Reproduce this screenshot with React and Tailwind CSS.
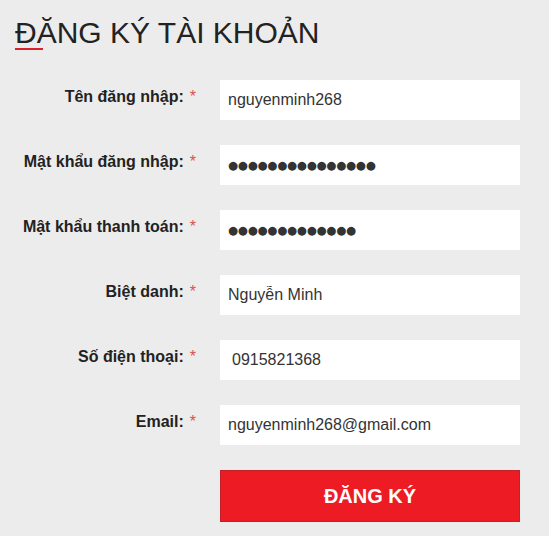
import { useState } from 'react';

const fields = [
  { label: 'Tên đăng nhập:', value: 'nguyenminh268', type: 'text' },
  { label: 'Mật khẩu đăng nhập:', value: '●●●●●●●●●●●●●●●', type: 'dots' },
  { label: 'Mật khẩu thanh toán:', value: '●●●●●●●●●●●●●', type: 'dots' },
  { label: 'Biệt danh:', value: 'Nguyễn Minh', type: 'text' },
  { label: 'Số điện thoại:', value: '0915821368', type: 'text', pad: 'pl-[12px]' },
  { label: 'Email:', value: 'nguyenminh268@gmail.com', type: 'text' },
];

export default function App() {
  const [values, setValues] = useState(fields.map((f) => f.value));

  return (
    <div className="min-h-[536px] w-[549px] bg-[#ececec] font-['Liberation_Sans',Arial,sans-serif] text-[#222]">
      {/* Title */}
      <div className="pl-[15px] pt-[16px]">
        <h1 className="text-[30px] leading-[33px] font-normal text-[#222]">ĐĂNG KÝ TÀI KHOẢN</h1>
        <div className="mt-[-1px] h-[2px] w-[28px] bg-[#d8232a]" />
      </div>

      {/* Form */}
      <form className="mt-[30px] flex flex-col gap-[25px]" onSubmit={(e) => e.preventDefault()}>
        {fields.map((f, i) => (
          <div key={f.label} className="flex items-start">
            <label className="flex w-[196px] justify-end pt-[6px] text-[16px] leading-[21px]">
              <span className="font-bold text-[#222]">{f.label}</span>
              <span className="ml-[6px] text-[#d9534f]">*</span>
            </label>
            {f.type === 'dots' ? (
              <input
                type="text"
                readOnly
                value={values[i]}
                className="ml-[24px] h-[40px] w-[300px] bg-white pl-[8px] text-[11.5px] tracking-[-0.2px] text-[#333] outline-none font-['DejaVu_Sans',sans-serif]"
              />
            ) : (
              <input
                type="text"
                value={values[i]}
                onChange={(e) => {
                  const next = [...values];
                  next[i] = e.target.value;
                  setValues(next);
                }}
                className={`ml-[24px] h-[40px] w-[300px] bg-white ${f.pad || 'pl-[8px]'} text-[16px] text-[#333] outline-none`}
              />
            )}
          </div>
        ))}

        <div className="flex">
          <button
            type="submit"
            className="ml-[220px] h-[52px] w-[300px] border border-[#c4202a] bg-[#ed1c24] text-[20px] font-bold text-white"
          >
            ĐĂNG KÝ
          </button>
        </div>
      </form>
    </div>
  );
}
